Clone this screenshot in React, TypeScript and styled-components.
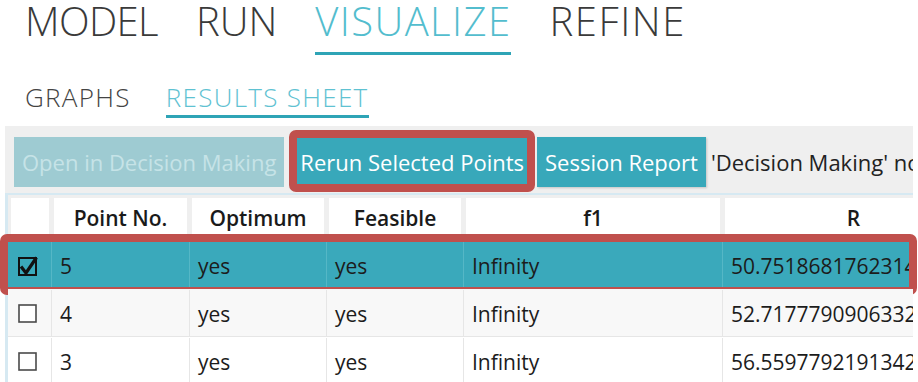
import styled, { createGlobalStyle } from 'styled-components'

const GlobalStyle = createGlobalStyle`
  html, body {
    margin: 0;
    padding: 0;
    background: #fff;
    width: 918px;
    height: 382px;
    overflow: hidden;
  }
  body {
    font-family: "Open Sans", "Noto Sans", sans-serif;
    color: #1e1e1e;
  }
`

const COLUMNS = '43px 138px 137px 137px 259px 262px'

const Page = styled.div`
  width: 918px;
  display: flex;
  flex-direction: column;
`

const MainNav = styled.nav`
  display: flex;
  gap: 38px;
  padding-left: 25px;
  height: 55px;
`

const MainNavItem = styled.div<{ $active?: boolean; $spacing: number }>`
  font-size: 40px;
  font-weight: 300;
  letter-spacing: ${(props) => props.$spacing}px;
  line-height: 42px;
  height: 42px;
  padding-bottom: 10px;
  color: ${(props) => (props.$active ? '#53bdce' : '#3a3a3a')};
  border-bottom: 3px solid ${(props) => (props.$active ? '#2ea4b6' : 'transparent')};
  white-space: nowrap;
`

const SubNav = styled.nav`
  display: flex;
  gap: 35px;
  padding-left: 25px;
  margin-top: 24px;
`

const SubNavItem = styled.div<{ $active?: boolean }>`
  font-size: 26px;
  font-weight: 300;
  letter-spacing: 1.3px;
  line-height: normal;
  color: ${(props) => (props.$active ? '#5fc2d2' : '#444')};
  border-bottom: 3px solid ${(props) => (props.$active ? '#2ea4b6' : 'transparent')};
  white-space: nowrap;
`

const Panel = styled.section`
  margin: 8px 5px 0 5px;
  background: #efefef;
  display: flex;
  flex-direction: column;
`

const Toolbar = styled.div`
  display: flex;
  align-items: center;
  gap: 8px;
  padding: 11px 0 0 9px;
  margin-bottom: 6px;
  height: 50px;
  white-space: nowrap;
`

const ActionButton = styled.button`
  height: 50px;
  padding: 0 8px;
  border: none;
  border-radius: 0;
  background: #38a8ba;
  color: #fff;
  font-family: "Open Sans", "Noto Sans", sans-serif;
  font-size: 22px;
  box-shadow: 1px 1px 2px rgba(0, 0, 0, 0.18);
  white-space: nowrap;

  &:disabled {
    background: #9ecbd2;
    color: #c6e3e7;
    box-shadow: none;
  }
`

const Marked = styled.div`
  position: relative;
  display: flex;
  margin-right: -3px;
`

const MarkBox = styled.div<{ $inset: string }>`
  position: absolute;
  inset: ${(props) => props.$inset};
  border: 8px solid #c0504d;
  border-radius: 7px;
  pointer-events: none;
`

const Notice = styled.div`
  font-size: 22px;
  color: #222;
  overflow: hidden;
  flex: 1;
  margin-left: -3px;
`

const Table = styled.div`
  border-top: 2px solid #d6e9f2;
  border-left: 3px solid #d6e9f2;
  display: flex;
  flex-direction: column;
`

const HeaderRow = styled.div`
  display: grid;
  grid-template-columns: ${COLUMNS};
  padding: 3px 0;
  overflow: hidden;
`

const HeaderCell = styled.div`
  margin: 0 2px 0 3px;
  height: 40px;
  background: #fff;
  display: flex;
  align-items: center;
  justify-content: center;
  font-size: 21px;
  font-weight: 600;
  color: #1a1a1a;
  white-space: nowrap;
`

const RowWrap = styled.div`
  position: relative;
`

const Row = styled.div<{ $selected?: boolean; $striped?: boolean }>`
  display: grid;
  grid-template-columns: ${COLUMNS};
  height: 48px;
  overflow: hidden;
  background: ${(props) => (props.$selected ? '#3aa9bb' : props.$striped ? '#f8f8f8' : '#fff')};
  border-top: 1px solid ${(props) => (props.$selected ? '#5fbccb' : 'transparent')};
  border-bottom: 1px solid ${(props) => (props.$selected ? '#3aa9bb' : '#e6e6e6')};
  box-sizing: border-box;
`

const Cell = styled.div<{ $selected?: boolean }>`
  display: flex;
  align-items: center;
  padding: 2px 0 0 8px;
  font-size: 21px;
  color: #1c1c1c;
  white-space: nowrap;
  overflow: hidden;
  border-left: 1px solid ${(props) => (props.$selected ? '#55b7c6' : '#e6e6e6')};

  &:first-child {
    border-left: none;
    padding-left: 10px;
  }
`

const CheckBox = ({ checked }: { checked: boolean }) =>
  checked ? (
    <svg width="20" height="20" viewBox="0 0 20 20">
      <rect x="1" y="2" width="17" height="17" fill="none" stroke="#111" strokeWidth="2" />
      <path d="M3 10.5 L8 17 L18.5 1.5" fill="none" stroke="#111" strokeWidth="3.2" />
    </svg>
  ) : (
    <svg width="20" height="20" viewBox="0 0 20 20">
      <rect x="1" y="1" width="17" height="17" fill="#fff" stroke="#4a4a4a" strokeWidth="1.6" />
    </svg>
  )

const navItems = [
  { label: 'MODEL', spacing: -0.6 },
  { label: 'RUN', spacing: 0 },
  { label: 'VISUALIZE', spacing: 1.4, active: true },
  { label: 'REFINE', spacing: 1.6 },
]

const rows = [
  { id: 5, optimum: 'yes', feasible: 'yes', f1: 'Infinity', r: '50.75186817623145', checked: true },
  { id: 4, optimum: 'yes', feasible: 'yes', f1: 'Infinity', r: '52.71777909063325', checked: false },
  { id: 3, optimum: 'yes', feasible: 'yes', f1: 'Infinity', r: '56.55977921913421', checked: false },
]

const App = () => {
  return (
    <>
      <GlobalStyle />
      <Page>
        <MainNav>
          {navItems.map((item) => (
            <MainNavItem key={item.label} $spacing={item.spacing} $active={item.active}>
              {item.label}
            </MainNavItem>
          ))}
        </MainNav>

        <SubNav>
          <SubNavItem>GRAPHS</SubNavItem>
          <SubNavItem $active>RESULTS SHEET</SubNavItem>
        </SubNav>

        <Panel>
          <Toolbar>
            <ActionButton disabled>Open in Decision Making</ActionButton>
            <Marked>
              <ActionButton>Rerun Selected Points</ActionButton>
              <MarkBox $inset="-7px -3px -5px -3px" />
            </Marked>
            <ActionButton>Session Report</ActionButton>
            <Notice>'Decision Making' not available</Notice>
          </Toolbar>

          <Table>
            <HeaderRow>
              <HeaderCell />
              <HeaderCell>Point No.</HeaderCell>
              <HeaderCell>Optimum</HeaderCell>
              <HeaderCell>Feasible</HeaderCell>
              <HeaderCell>f1</HeaderCell>
              <HeaderCell>R</HeaderCell>
            </HeaderRow>

            {rows.map((row, i) => (
              <RowWrap key={row.id}>
                <Row $selected={row.checked} $striped={i % 2 === 1}>
                  <Cell $selected={row.checked}>
                    <CheckBox checked={row.checked} />
                  </Cell>
                  <Cell $selected={row.checked}>{row.id}</Cell>
                  <Cell $selected={row.checked}>{row.optimum}</Cell>
                  <Cell $selected={row.checked}>{row.feasible}</Cell>
                  <Cell $selected={row.checked}>{row.f1}</Cell>
                  <Cell $selected={row.checked}>{row.r}</Cell>
                </Row>
                {row.checked && <MarkBox $inset="-7px -4px -6px -8px" />}
              </RowWrap>
            ))}
          </Table>
        </Panel>
      </Page>
    </>
  )
}

export default App
